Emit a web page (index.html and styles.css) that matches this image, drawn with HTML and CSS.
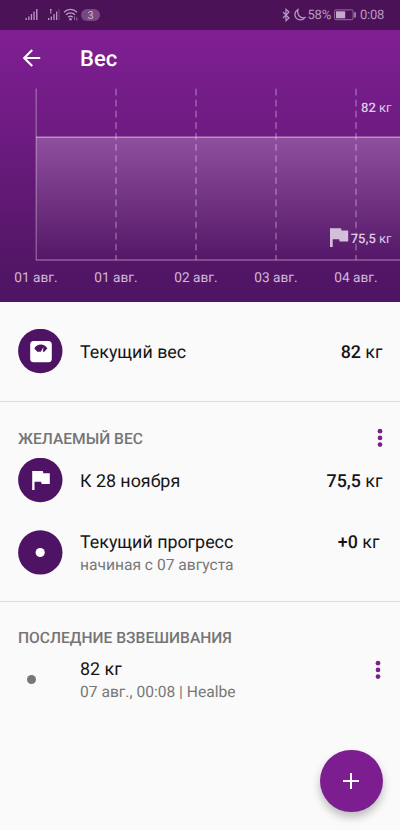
FILE: index.html
```html
<!DOCTYPE html>
<html lang="ru">
<head>
<meta charset="utf-8">
<title>Вес</title>
<link rel="stylesheet" href="styles.css">
</head>
<body>
<div class="status">
  <svg class="status-left" width="54" height="14" viewBox="0 0 54 14">
    <g fill="#b999c4">
      <path d="M.5 10h1.300v2H.5zM3.200 8.500h1.300V12H3.200zM5.800 6h1.300v6H5.800zM8.400 3.500h1.300V12H8.400zM11.100 1h1.400v11h-1.400z"/>
      <path d="M23 10h1.300v2H23zM25.700 8.500H27V12h-1.300zM28.400 6h1.300v6h-1.300zM31 3.500h1.300V12H31z"/>
      <path d="M25 1h1.500v2.500H25zM25 4.200h1.500v1.200H25z"/>
      <path d="M33.500 1h1.100v11h-1.100z" opacity=".35"/>
    </g>
    <g fill="none" stroke="#b999c4" stroke-width="1.300">
      <path d="M39 4.200c3.500-3.700 9.500-3.700 13 0M41 6.800c2.500-2.500 6.500-2.500 9 0M43.200 9.200c1.300-1.300 3.300-1.300 4.600 0"/>
      <path d="M49.600 8.500v3.500M51.800 9.500v3" stroke-width="1" opacity=".7"/>
    </g>
    <circle cx="45.500" cy="11.300" r="1.200" fill="#b999c4"/>
  </svg>
  <span class="badge">3</span>
  <span class="spacer"></span>
  <svg width="24" height="14" viewBox="0 0 24 14" fill="none" stroke="#b999c4" stroke-width="1.200">
    <path d="M1 4l6 6-3 2.700V1.300L7 4 1 10"/>
    <path d="M16 1.500A5.500 5.500 0 1 0 23 9.500C18.500 11.200 14.500 6.500 16 1.500z" stroke-width="1.300"/>
  </svg>
  <span class="battery-text">58%</span>
  <svg class="battery" width="23" height="12" viewBox="0 0 23 12">
    <rect x=".6" y=".9" width="18.500" height="9.800" rx="1.500" fill="none" stroke="#94709f" stroke-width="1"/>
    <path d="M2 2.300h9.200v7H2z" fill="#c5a9ce"/>
    <path d="M20.300 3.200h1.500v5.200h-1.500z" fill="#b999c4"/>
  </svg>
  <span class="clock">0:08</span>
</div>
<header class="hero">
  <div class="toolbar">
    <svg width="20" height="18" viewBox="0 0 20 18" fill="none" stroke="#fff" stroke-width="2.100"><path d="M18.200 9H2.300M10.200 1L2.200 9l8 8"/></svg>
    <h1>Вес</h1>
  </div>
  <svg class="chart" width="400" height="174" viewBox="0 88 400 174">
    <defs>
      <linearGradient id="area" x1="0" y1="0" x2="0" y2="1">
        <stop offset="0" stop-color="#fff" stop-opacity=".23"/>
        <stop offset="1" stop-color="#fff" stop-opacity="0"/>
      </linearGradient>
    </defs>
    <path d="M36 137h364v123H36z" fill="url(#area)"/>
    <path d="M36.200 88.500V260" stroke="#fff" stroke-opacity=".35" stroke-width="1.200"/>
    <path d="M36 260h364" stroke="#fff" stroke-opacity=".32" stroke-width="1.500"/>
    <path d="M36 137.200h364" stroke="#fff" stroke-opacity=".5" stroke-width="1.300"/>
    <path d="M116 88.700V260M196 88.700V260M276 88.700V260M356 88.700V260" stroke="#fff" stroke-opacity=".29" stroke-width="1.600" stroke-dasharray="6.700 4.380"/>
    <path d="M330 228.300h11l.5 2.200h6.700v11h-8.600l-.5-2.200h-6.400v7.700H330z" fill="#d5bddc"/>
    <g class="values" text-anchor="end">
      <text x="391.500" y="112"><tspan>82</tspan><tspan class="unit"> кг</tspan></text>
      <text x="391.500" y="243"><tspan>75,5</tspan><tspan class="unit"> кг</tspan></text>
    </g>
  </svg>
  <div class="dates"><span>01 авг.</span><span>01 авг.</span><span>02 авг.</span><span>03 авг.</span><span>04 авг.</span></div>
</header>
<main>
  <section class="current">
    <div class="row">
      <svg class="disc" width="45" height="45" viewBox="0 0 45 45">
        <circle cx="22.300" cy="22" r="22.200" fill="#4e1364"/>
        <rect x="12.200" y="12" width="21.600" height="21.300" rx="3.500" fill="#fff"/>
        <path d="M16.300 19.500c2.500-5.200 10.500-5.200 13 0l-3 3.300h-1.500l.8-4.700-2.900 4.700h-3.400z" fill="#4e1364"/>
      </svg>
      <div class="title">Текущий вес</div>
      <div class="amount"><b>82</b> кг</div>
    </div>
  </section>
  <section class="goal">
    <div class="head">
      <h2>ЖЕЛАЕМЫЙ ВЕС</h2>
      <svg class="menu" width="6" height="20" viewBox="0 0 6 20"><circle cx="3" cy="3.200" r="2.350"/><circle cx="3" cy="9.900" r="2.350"/><circle cx="3" cy="16.600" r="2.350"/></svg>
    </div>
    <div class="row">
      <svg class="disc" width="45" height="45" viewBox="0 0 45 45">
        <circle cx="22.300" cy="22" r="22.200" fill="#4e1364"/>
        <path d="M14.200 13h10.600l.5 2.200h6.500v10.700h-8.100l-.6-2.200h-6.600V32h-2.300z" fill="#fff"/>
      </svg>
      <div class="title">К 28 ноября</div>
      <div class="amount"><b>75,5</b> кг</div>
    </div>
    <div class="row progress">
      <svg class="disc" width="45" height="45" viewBox="0 0 45 45">
        <circle cx="22.300" cy="22.400" r="22.200" fill="#4e1364"/><circle cx="22.200" cy="22.500" r="4.600" fill="#fff"/>
      </svg>
      <div class="title">Текущий прогресс<small>начиная с 07 августа</small></div>
      <div class="amount"><b>+0</b> кг</div>
    </div>
  </section>
  <section class="history">
    <h2>ПОСЛЕДНИЕ ВЗВЕШИВАНИЯ</h2>
    <div class="entry">
      <span class="dot"></span>
      <div class="title">82 кг<small>07 авг., 00:08 | Healbe</small></div>
      <svg class="menu" width="6" height="20" viewBox="0 0 6 20"><circle cx="3" cy="3.200" r="2.350"/><circle cx="3" cy="9.900" r="2.350"/><circle cx="3" cy="16.600" r="2.350"/></svg>
    </div>
  </section>
</main>
<button class="fab" aria-label="Добавить"><svg width="16" height="16" viewBox="0 0 16 16" stroke="#fff" stroke-width="2"><path d="M8 0v16M0 8h16"/></svg></button>
</body>
</html>
```
FILE: styles.css
```css
* { box-sizing: border-box; }
body {
  margin: 0;
  width: 400px;
  height: 830px;
  overflow: hidden;
  background: #fafafa;
  color: #151515;
  font-family: Roboto, sans-serif;
  text-rendering: geometricPrecision;
}
svg { display: block; flex: none; }
h1, h2 { margin: 0; font-weight: 500; }
.status {
  height: 30px;
  padding: 0 16px 0 25px;
  display: flex;
  align-items: center;
  background: #4b1257;
  color: #b999c4;
}
.badge {
  width: 19px;
  height: 12px;
  margin-left: 2px;
  border-radius: 6px;
  background: #77497f;
  color: #cdb6d3;
  font-size: 11px;
  line-height: 13px;
  text-align: center;
}
.spacer { flex: 1; }
.battery-text, .clock {
  font-size: 13px;
  line-height: 16px;
  letter-spacing: -.25px;
  padding-top: 1px;
}
.battery-text { margin-left: 2px; }
.battery { margin: 0 3px; }
.hero {
  height: 272px;
  background: linear-gradient(#7f1f93, #6e1b82 38%, #5a186d 72%, #4e1462);
  color: #fff;
}
.toolbar {
  height: 58px;
  padding: 0 22px 2px;
  display: flex;
  align-items: center;
  gap: 38px;
}
h1 { padding-top: 3px; font-size: 22px; line-height: 28px; }
.values { fill: #dfcbe4; font-size: 13px; font-weight: 500; }
.unit { font-weight: 400; }
.dates {
  width: 400px;
  padding-top: 7px;
  margin-left: -4px;
  display: grid;
  grid-template-columns: repeat(5, 80px);
  font-size: 13.700px;
  line-height: 18px;
  text-align: center;
  color: #d0b9d8;
}
.row {
  display: grid;
  grid-template-columns: 62px 1fr auto;
  align-items: center;
  height: 45px;
}
.title, .amount {
  padding-top: 2px;
  font-size: 17.850px;
  line-height: 24px;
}
.title small {
  display: block;
  color: #777;
  font-size: 15.600px;
  line-height: 21px;
}
.amount b { font-weight: 500; }
.menu { fill: #7c1e90; }
.current {
  height: 100px;
  padding: 27px 17.500px 0 18px;
  border-bottom: 1px solid #dcdcdc;
}
.goal {
  height: 200px;
  padding: 25px 17.500px 0 18px;
  border-bottom: 1px solid #dcdcdc;
}
.head {
  height: 31px;
  display: flex;
  justify-content: space-between;
}
.head .menu { margin-top: 1px; }
h2 { color: #757575; font-size: 15.600px; line-height: 23px; }
.head h2 { padding-top: 1px; }
.progress { margin-top: 26px; padding-right: 3px; }
.progress .amount { align-self: start; }
.history { padding: 25px 19.500px 0 18px; }
.entry {
  display: grid;
  grid-template-columns: 62px 1fr auto;
  padding-top: 7px;
}
.entry .title { padding-top: 1px; }
.entry .menu { margin-top: 3px; }
.dot {
  width: 9px;
  height: 9px;
  margin: 18px 0 0 9px;
  border-radius: 50%;
  background: #777;
}
.fab {
  position: absolute;
  left: 320px;
  top: 749.500px;
  width: 62.500px;
  height: 62.500px;
  padding: 0;
  border: 0;
  border-radius: 50%;
  display: grid;
  place-items: center;
  background: #7c1e90;
  box-shadow: 0 5px 9px rgba(0, 0, 0, .25);
}
```
